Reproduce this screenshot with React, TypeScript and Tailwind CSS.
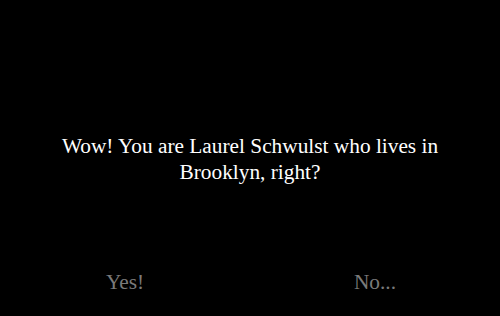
export default function App() {
  return (
    <div className="flex h-[316px] w-[500px] flex-col bg-black font-['Liberation_Serif',serif] text-white">
      <div className="flex flex-1 items-center justify-center px-8 pt-[48px]">
        <p className="text-center text-[21.33px] leading-[26px]">
          Wow! You are Laurel Schwulst who lives in Brooklyn, right?
        </p>
      </div>
      <div className="flex pb-[21px]">
        <button className="flex-1 text-[21.33px] leading-[26px] text-[#7a7a7a]">Yes!</button>
        <button className="flex-1 text-[21.33px] leading-[26px] text-[#7a7a7a]">No...</button>
      </div>
    </div>
  );
}
